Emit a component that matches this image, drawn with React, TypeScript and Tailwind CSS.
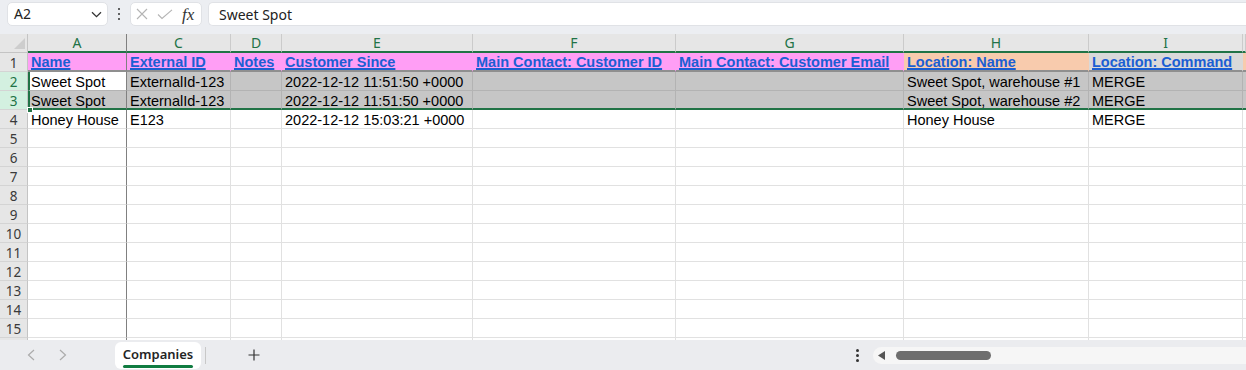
import React from "react";

const WIDTHS = [
  "w-[99px]",
  "w-[104px]",
  "w-[51px]",
  "w-[191px]",
  "w-[203px]",
  "w-[228px]",
  "w-[185px]",
  "w-[154px]",
  "flex-1 min-w-0",
];
const LETTERS = ["A", "C", "D", "E", "F", "G", "H", "I", ""];

const HEADERS = [
  "Name",
  "External ID",
  "Notes",
  "Customer Since",
  "Main Contact: Customer ID",
  "Main Contact: Customer Email",
  "Location: Name",
  "Location: Command",
  "",
];

const DATA: string[][] = [
  ["Sweet Spot", "ExternalId-123", "", "2022-12-12 11:51:50 +0000", "", "", "Sweet Spot, warehouse #1", "MERGE", ""],
  ["Sweet Spot", "ExternalId-123", "", "2022-12-12 11:51:50 +0000", "", "", "Sweet Spot, warehouse #2", "MERGE", ""],
  ["Honey House", "E123", "", "2022-12-12 15:03:21 +0000", "", "", "Honey House", "MERGE", ""],
];

const CELL_FONT = { fontFamily: '"Liberation Sans", Arial, sans-serif' };
const UI_FONT = { fontFamily: '"Noto Sans", "Open Sans", sans-serif' };

function RowHeader({ n, sel }: { n: number | null; sel: boolean }) {
  return (
    <div
      className={`w-[28px] shrink-0 h-[19px] border-r border-b border-r-[#c4c4c4] border-b-[#d4d4d4] text-center text-[13.5px] leading-[20px] overflow-hidden ${
        sel ? "bg-[#d3f0e0] text-[#217346]" : "bg-[#e6e6e6] text-[#3a3a3a]"
      }`}
      style={UI_FONT}
    >
      {n}
    </div>
  );
}

function HeaderRow1() {
  return (
    <div className="flex h-[19px]">
      <RowHeader n={1} sel={false} />
      {HEADERS.map((h, i) => {
        const bg =
          i <= 5 ? "bg-[#ff9ef5]" : i === 6 || i === 8 ? "bg-[#f8cbad]" : "bg-[#d9d9d9]";
        const r = i === 0 ? "border-r-[#808080]" : "border-r-transparent";
        return (
          <div
            key={i}
            className={`${WIDTHS[i]} shrink-0 h-[19px] border-r border-b-2 border-b-[#8f8f8f] ${r} ${bg} px-[3px] overflow-hidden whitespace-nowrap text-[14.5px] leading-[19px] font-bold text-[#1b5fd3]`}
            style={CELL_FONT}
          >
            {h && <span className="underline decoration-[1.5px] underline-offset-[1px]">{h}</span>}
          </div>
        );
      })}
    </div>
  );
}

function SelRow({ cells, idx }: { cells: string[]; idx: number }) {
  const last = idx === 1;
  return (
    <div className="flex h-[19px]">
      <RowHeader n={idx + 2} sel />
      {cells.map((t, i) => {
        const isA = i === 0;
        const bg = isA && idx === 0 ? "bg-white" : "bg-[#c6c6c6]";
        const r = isA ? "border-r-[#808080]" : "border-r-[#b3b3b3]";
        const b = last ? "border-b-2 border-b-[#217346]" : "border-b border-b-[#b3b3b3]";
        const l = isA ? "border-l-2 border-l-[#217346] pl-[1px] pr-[3px]" : "px-[3px]";
        return (
          <div
            key={i}
            className={`${WIDTHS[i]} shrink-0 h-[19px] border-r ${r} ${b} ${l} ${bg} overflow-hidden whitespace-nowrap text-[14.5px] leading-[20px] text-black`}
            style={CELL_FONT}
          >
            {t}
          </div>
        );
      })}
    </div>
  );
}

function NormalRow({ cells, n }: { cells: string[]; n: number | null }) {
  return (
    <div className="flex h-[19px]">
      <RowHeader n={n} sel={false} />
      {cells.map((t, i) => (
        <div
          key={i}
          className={`${WIDTHS[i]} shrink-0 h-[19px] border-r border-b border-b-[#e1e1e1] ${
            i === 0 ? "border-r-[#808080]" : "border-r-[#e1e1e1]"
          } bg-white px-[3px] overflow-hidden whitespace-nowrap text-[14.5px] leading-[20px] text-black`}
          style={CELL_FONT}
        >
          {t}
        </div>
      ))}
    </div>
  );
}

export default function App() {
  const empty = Array(9).fill("");
  return (
    <div className="w-[1246px] h-[370px] overflow-hidden flex flex-col bg-white">
      {/* formula bar */}
      <div className="h-[34px] shrink-0 bg-[#eceef2] flex items-start pt-[2px] pl-[7px]" style={UI_FONT}>
        <div className="w-[101px] h-[24px] bg-white rounded-[5px] border border-[#e0e2e6] flex items-center justify-between pl-[6px] pr-[5px]">
          <span className="text-[14px] text-[#222] leading-none">A2</span>
          <svg width="11" height="7" viewBox="0 0 11 7">
            <path d="M1 1.2 L5.5 5.6 L10 1.2" fill="none" stroke="#333" strokeWidth="1.3" />
          </svg>
        </div>
        <div className="w-[22px] h-[24px] flex flex-col items-center justify-center gap-[2.5px]">
          <span className="w-[2.5px] h-[2.5px] rounded-full bg-[#333]" />
          <span className="w-[2.5px] h-[2.5px] rounded-full bg-[#333]" />
          <span className="w-[2.5px] h-[2.5px] rounded-full bg-[#333]" />
        </div>
        <div className="w-[72px] h-[24px] bg-white rounded-[5px] border border-[#e0e2e6] flex items-center pl-[5px]">
          <svg width="12" height="12" viewBox="0 0 12 12">
            <path d="M1 1 L11 11 M11 1 L1 11" stroke="#b4b4b4" strokeWidth="1.1" fill="none" />
          </svg>
          <svg width="16" height="11" viewBox="0 0 16 11" className="ml-[9px]">
            <path d="M1 5.5 L5 9.5 L15 0.8" stroke="#b4b4b4" strokeWidth="1.1" fill="none" />
          </svg>
          <span
            className="ml-[9px] text-[17px] italic text-[#333] leading-none"
            style={{ fontFamily: '"Liberation Serif", "Times New Roman", serif' }}
          >
            fx
          </span>
        </div>
        <div className="ml-[6px] flex-1 h-[24px] bg-white rounded-l-[5px] border border-r-0 border-[#e0e2e6] flex items-center pl-[10px]">
          <span className="text-[14px] text-[#222]">Sweet Spot</span>
        </div>
      </div>

      {/* grid */}
      <div className="relative h-[306px] shrink-0 overflow-hidden">
        {/* column headers */}
        <div className="flex h-[19px]">
          <div className="w-[28px] shrink-0 h-[19px] bg-[#e6e6e6] border-r border-b border-r-[#c4c4c4] border-b-[#c4c4c4] flex items-end justify-end pr-[2px] pb-[3px]">
            <svg width="11" height="11" viewBox="0 0 11 11">
              <path d="M11 0 L11 11 L0 11 Z" fill="#cdcdcd" />
            </svg>
          </div>
          {LETTERS.map((l, i) => (
            <div
              key={i}
              className={`${WIDTHS[i]} shrink-0 h-[19px] bg-[#e6e6e6] border-r border-b-2 border-b-[#217346] ${
                i === 0 ? "border-r-[#808080]" : "border-r-[#cbcbcb]"
              } text-center text-[14px] leading-[18px] text-[#217346] overflow-hidden`}
              style={UI_FONT}
            >
              {l}
            </div>
          ))}
        </div>
        <HeaderRow1 />
        <SelRow cells={DATA[0]} idx={0} />
        <SelRow cells={DATA[1]} idx={1} />
        <NormalRow cells={DATA[2]} n={4} />
        {Array.from({ length: 12 }, (_, k) => (
          <NormalRow key={k} cells={empty} n={k + 5 <= 15 ? k + 5 : null} />
        ))}
        {/* fill handle */}
        <div className="absolute left-[27px] top-[73px] w-[6px] h-[6px] bg-[#217346] border border-white" />
      </div>

      {/* sheet tabs */}
      <div className="flex-1 bg-[#ebecef] flex items-center" style={UI_FONT}>
        <svg width="8" height="12" viewBox="0 0 8 12" className="ml-[27px]">
          <path d="M7 1 L1.5 6 L7 11" fill="none" stroke="#ababab" strokeWidth="1.2" />
        </svg>
        <svg width="8" height="12" viewBox="0 0 8 12" className="ml-[24px]">
          <path d="M1 1 L6.5 6 L1 11" fill="none" stroke="#ababab" strokeWidth="1.2" />
        </svg>
        <div className="ml-[48px] w-[86px] h-[27px] mt-[1px] bg-white rounded-[6px] flex flex-col items-center pt-[4px]">
          <span className="text-[13px] leading-[17px] font-semibold text-[#242424]">Companies</span>
          <span className="mt-[2px] w-[70px] h-[3px] rounded-full bg-[#107c41]" />
        </div>
        <div className="ml-[4px] w-[1px] h-[17px] bg-[#c8c8c8]" />
        <svg width="12" height="12" viewBox="0 0 12 12" className="ml-[42px]">
          <path d="M6 0.5 V11.5 M0.5 6 H11.5" stroke="#333" strokeWidth="1.2" fill="none" />
        </svg>
        <div className="ml-[596px] w-[3px] flex flex-col items-center gap-[2px]">
          <span className="w-[3px] h-[3px] rounded-full bg-[#333]" />
          <span className="w-[3px] h-[3px] rounded-full bg-[#333]" />
          <span className="w-[3px] h-[3px] rounded-full bg-[#333]" />
        </div>
        <div className="ml-[14px] flex-1 h-[17px] rounded-l-full bg-[#f6f6f6] flex items-center pl-[5px]">
          <svg width="7" height="9" viewBox="0 0 7 9">
            <path d="M7 0 L7 9 L0 4.5 Z" fill="#555" />
          </svg>
          <div className="ml-[11px] w-[95px] h-[9px] rounded-full bg-[#6e6e6e]" />
        </div>
      </div>
    </div>
  );
}
